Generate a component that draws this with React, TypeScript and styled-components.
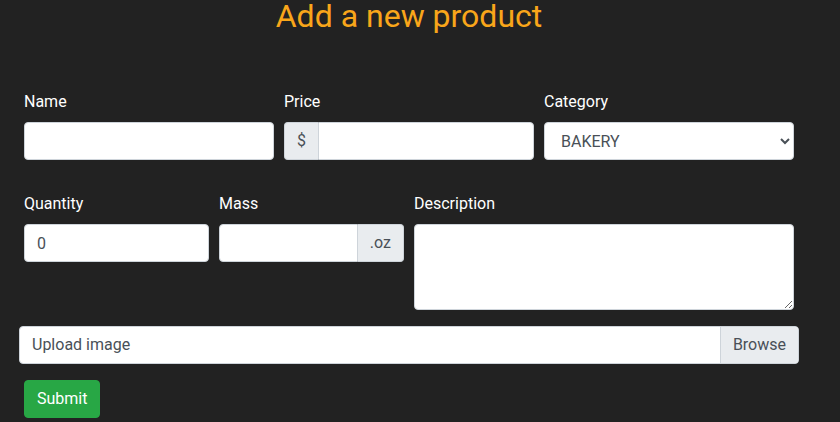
import React from 'react'
import styled, { createGlobalStyle } from 'styled-components'

const GlobalStyle = createGlobalStyle`
    html, body {
        margin: 0;
        padding: 0;
        background: #222222;
    }
    body {
        font-family: Roboto, "Liberation Sans", sans-serif;
        font-size: 16px;
        line-height: 24px;
        color: #ffffff;
    }
    * {
        box-sizing: border-box;
    }
`

const Page = styled.div`
    width: 780px;
    margin-left: 19px;
    height: 422px;
`

const Title = styled.h2`
    margin: -3px 0 0 0;
    font-size: 32px;
    line-height: 38px;
    font-weight: 400;
    text-align: center;
    color: #f9a61a;
`

const Form = styled.form`
    margin-top: 55px;
    display: flex;
    flex-direction: column;
`

const FormRow = styled.div<{ $cols: string; $gap: number }>`
    display: grid;
    grid-template-columns: ${(p) => p.$cols};
    margin-bottom: ${(p) => p.$gap}px;
`

const Col = styled.div`
    padding: 0 5px;
    display: flex;
    flex-direction: column;
`

const Label = styled.label`
    display: block;
    font-weight: 400;
    color: #ffffff;
    margin-bottom: 8px;
    line-height: 24px;
`

const Input = styled.input`
    display: block;
    width: 100%;
    height: 38px;
    padding: 6px 12px;
    font-family: Roboto, "Liberation Sans", sans-serif;
    font-size: 16px;
    line-height: 24px;
    color: #495057;
    background: #ffffff;
    border: 1px solid #ced4da;
    border-radius: 4px;
    outline: none;
    min-width: 0;
`

const InputGroup = styled.div`
    display: flex;
    height: 38px;
`

const GroupInput = styled(Input)<{ $side: 'left' | 'right' }>`
    flex: 1;
    border-radius: ${(p) => (p.$side === 'left' ? '0 4px 4px 0' : '4px 0 0 4px')};
`

const Addon = styled.span<{ $side: 'left' | 'right' }>`
    display: flex;
    align-items: center;
    padding: 6px 12px;
    background: #e9ecef;
    color: #495057;
    border: 1px solid #ced4da;
    border-radius: ${(p) => (p.$side === 'left' ? '4px 0 0 4px' : '0 4px 4px 0')};
    ${(p) => (p.$side === 'left' ? 'border-right: 0;' : 'border-left: 0;')}
`

const Select = styled.select`
    display: block;
    width: 100%;
    height: 38px;
    padding: 6px 12px;
    font-family: Roboto, "Liberation Sans", sans-serif;
    font-size: 16px;
    color: #495057;
    background: #ffffff;
    border: 1px solid #ced4da;
    border-radius: 4px;
    outline: none;
`

const TextArea = styled.textarea`
    display: block;
    width: 100%;
    height: 86px;
    padding: 6px 12px;
    font-family: Roboto, "Liberation Sans", sans-serif;
    font-size: 16px;
    line-height: 24px;
    color: #495057;
    background: #ffffff;
    border: 1px solid #ced4da;
    border-radius: 4px;
    outline: none;
`

const FileBox = styled.label`
    display: flex;
    height: 38px;
    margin-bottom: 16px;
    background: #ffffff;
    border: 1px solid #ced4da;
    border-radius: 4px;
    overflow: hidden;
    color: #495057;
    cursor: pointer;
`

const FileText = styled.span`
    flex: 1;
    padding: 6px 12px;
    line-height: 24px;
`

const BrowseButton = styled.span`
    padding: 6px 12px;
    line-height: 24px;
    background: #e9ecef;
    border-left: 1px solid #ced4da;
`

const SubmitButton = styled.button`
    align-self: flex-start;
    margin-left: 5px;
    height: 38px;
    padding: 6px 12px;
    font-family: Roboto, "Liberation Sans", sans-serif;
    font-size: 16px;
    line-height: 24px;
    color: #ffffff;
    background: #28a745;
    border: 1px solid #28a745;
    border-radius: 4px;
    cursor: pointer;
`

export default function App() {
    return (
        <>
            <GlobalStyle />
            <Page>
                <Title>Add a new product</Title>
                <Form onSubmit={(e) => e.preventDefault()}>
                    <FormRow $cols="1fr 1fr 1fr" $gap={32}>
                        <Col>
                            <Label htmlFor="name">Name</Label>
                            <Input id="name" type="text" />
                        </Col>
                        <Col>
                            <Label htmlFor="price">Price</Label>
                            <InputGroup>
                                <Addon $side="left">$</Addon>
                                <GroupInput id="price" type="text" $side="left" />
                            </InputGroup>
                        </Col>
                        <Col>
                            <Label htmlFor="category">Category</Label>
                            <Select id="category" defaultValue="BAKERY">
                                <option>BAKERY</option>
                                <option>DAIRY</option>
                                <option>PRODUCE</option>
                                <option>MEAT</option>
                            </Select>
                        </Col>
                    </FormRow>
                    <FormRow $cols="1fr 1fr 2fr" $gap={16}>
                        <Col>
                            <Label htmlFor="quantity">Quantity</Label>
                            <Input id="quantity" type="text" defaultValue="0" />
                        </Col>
                        <Col>
                            <Label htmlFor="mass">Mass</Label>
                            <InputGroup>
                                <GroupInput id="mass" type="text" $side="right" />
                                <Addon $side="right">.oz</Addon>
                            </InputGroup>
                        </Col>
                        <Col>
                            <Label htmlFor="description">Description</Label>
                            <TextArea id="description" rows={3} />
                        </Col>
                    </FormRow>
                    <FileBox>
                        <FileText>Upload image</FileText>
                        <BrowseButton>Browse</BrowseButton>
                    </FileBox>
                    <SubmitButton type="submit">Submit</SubmitButton>
                </Form>
            </Page>
        </>
    )
}
